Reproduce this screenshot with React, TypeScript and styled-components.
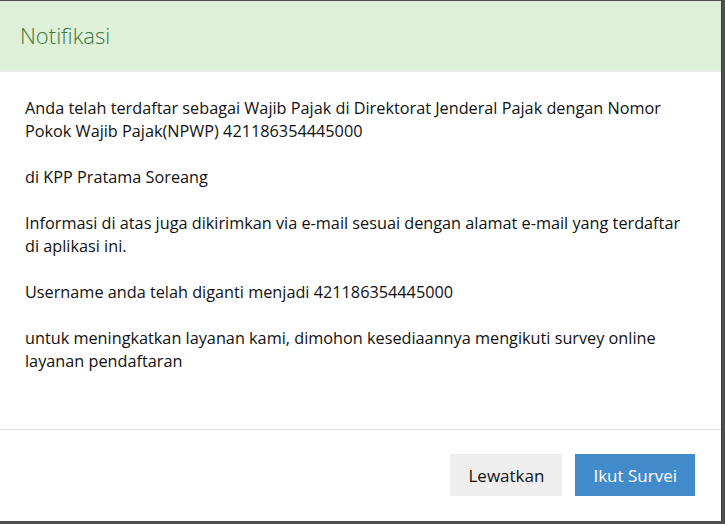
import React from 'react';
import styled, { createGlobalStyle } from 'styled-components';

const GlobalStyle = createGlobalStyle`
  html, body {
    margin: 0;
    padding: 0;
    background: #4f4f4f;
  }
  body {
    font-family: "Open Sans", "Liberation Sans", sans-serif;
  }
`;

const Backdrop = styled.div`
  width: 725px;
  height: 524px;
  box-sizing: border-box;
  padding: 1px 3px 3px 0;
  background: #4f4f4f;
`;

const Modal = styled.div`
  height: 100%;
  display: flex;
  flex-direction: column;
  background: #fff;
  border-right: 1px solid #3a3a3a;
  box-sizing: border-box;
`;

const Header = styled.div`
  height: 71px;
  box-sizing: border-box;
  display: flex;
  align-items: center;
  padding: 0 20px 1px;
  background: #dff0d8;
  border-bottom: 1px solid #e8eee4;
`;

const Title = styled.h4`
  margin: 0;
  font-size: 22px;
  font-weight: 300;
  color: #3c763d;
  line-height: 1.1;
`;

const Body = styled.div`
  flex: 1;
  padding: 25px 25px 0;
  font-size: 16.25px;
  line-height: 23px;
  color: #111;
`;

const Para = styled.p`
  margin: 0 0 23px;
`;

const Footer = styled.div`
  display: flex;
  justify-content: flex-end;
  gap: 13px;
  padding: 24px 26px 25px;
  border-top: 1px solid #e5e5e5;
`;

const Button = styled.button<{ $primary?: boolean }>`
  height: 42px;
  padding: 0 18px;
  border: none;
  border-radius: 0;
  font-family: "Open Sans", "Liberation Sans", sans-serif;
  font-size: 17px;
  cursor: pointer;
  background: ${p => (p.$primary ? '#428bca' : '#eeeeee')};
  color: ${p => (p.$primary ? '#fff' : '#111')};
`;

export default function App() {
  return (
    <>
      <GlobalStyle />
      <Backdrop>
        <Modal>
          <Header>
            <Title>Notifikasi</Title>
          </Header>
          <Body>
            <Para>
              Anda telah terdaftar sebagai Wajib Pajak di Direktorat Jenderal Pajak dengan Nomor
              Pokok Wajib Pajak(NPWP) 421186354445000
            </Para>
            <Para>di KPP Pratama Soreang</Para>
            <Para>
              Informasi di atas juga dikirimkan via e-mail sesuai dengan alamat e-mail yang terdaftar
              di aplikasi ini.
            </Para>
            <Para>Username anda telah diganti menjadi 421186354445000</Para>
            <Para>
              untuk meningkatkan layanan kami, dimohon kesediaannya mengikuti survey online
              layanan pendaftaran
            </Para>
          </Body>
          <Footer>
            <Button>Lewatkan</Button>
            <Button $primary>Ikut Survei</Button>
          </Footer>
        </Modal>
      </Backdrop>
    </>
  );
}
